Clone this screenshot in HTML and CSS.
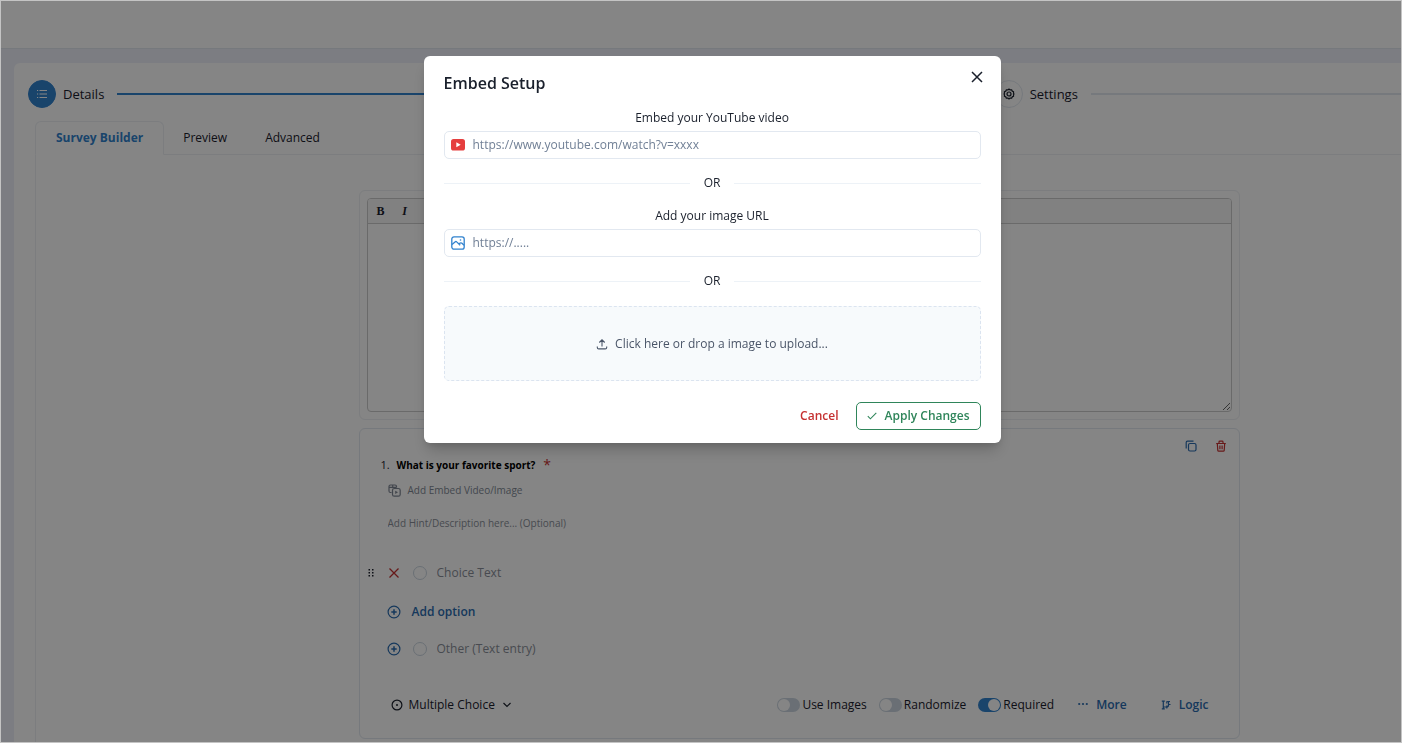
FILE: index.html
```html
<!DOCTYPE html>
<html lang="en">
<head>
<meta charset="utf-8">
<meta name="viewport" content="width=device-width, initial-scale=1">
<title>Survey Builder</title>
<link rel="stylesheet" href="styles.css">
</head>
<body>
<div class="app">
  <header class="topbar"></header>
  <main class="panel">
    <ol class="steps">
      <li class="step step-active">
        <span class="step-dot"><svg width="14" height="14" viewBox="0 0 14 14" fill="none" stroke="currentColor"><path d="M4.500 3.500H12M4.500 7H12M4.500 10.500H12M2 3.500H3.200M2 7H3.200M2 10.500H3.200"/></svg></span>
        <span class="step-name">Details</span>
        <span class="step-line"></span>
      </li>
      <li class="step">
        <span class="step-dot"><svg width="12" height="12" viewBox="0 0 24 24" fill="none" stroke="currentColor" stroke-width="2.400"><path d="M12 2.200l2.400 1.700 2.900-.3 1.200 2.700 2.700 1.200-.3 2.900L22 12l-1.100 1.600.3 2.900-2.700 1.200-1.200 2.700-2.900-.3L12 21.800l-2.400-1.700-2.900.3-1.200-2.700-2.700-1.200.3-2.900L2 12l1.100-1.600-.3-2.900 2.700-1.200 1.200-2.700 2.900.3z" stroke-linejoin="round"/><circle cx="12" cy="12" r="4"/></svg></span>
        <span class="step-name">Settings</span>
        <span class="step-line"></span>
      </li>
    </ol>

    <nav class="tabs" role="tablist">
      <button class="tab tab-active" role="tab" aria-selected="true">Survey Builder</button>
      <button class="tab" role="tab">Preview</button>
      <button class="tab" role="tab">Advanced</button>
    </nav>

    <section class="tab-body">
      <div class="card editor-card">
        <div class="editor">
          <div class="toolbar">
            <button class="tool tool-bold">B</button>
            <button class="tool tool-italic">I</button>
          </div>
          <textarea class="editor-text" aria-label="Survey introduction"></textarea>
        </div>
      </div>

      <div class="card question">
        <div class="card-actions">
          <button class="icon-btn blue" aria-label="Duplicate"><svg width="12" height="12" viewBox="0 0 12 12" fill="none" stroke="currentColor" stroke-width="1.200"><rect x="3.500" y="3.500" width="7.500" height="7.500" rx="1.500"/><path d="M1.200 8.500V2.500Q1.200 1.200 2.500 1.200H8.500"/></svg></button>
          <button class="icon-btn red" aria-label="Delete"><svg width="12" height="12" viewBox="0 0 12 12" fill="none" stroke="currentColor" stroke-width="1.200"><path d="M1.200 3.500H10.800M2.300 3.500L2.800 10.500Q2.900 11.200 3.600 11.200H8.400Q9.100 11.200 9.200 10.500L9.700 3.500M4 3.200V2Q4 1.200 4.800 1.200H7.200Q8 1.200 8 2V3.200M4.900 5.500V9.200M7.100 5.500V9.200"/></svg></button>
        </div>
        <div class="q-title">
          <span class="q-num">1.</span>
          <h2 class="q-text">What is your favorite sport?</h2>
          <span class="q-star">*</span>
        </div>
        <button class="embed-link">
          <svg width="13" height="13" viewBox="0 0 13 13" fill="none" stroke="currentColor" stroke-width="1.200"><path d="M3.500 8.500H2.500Q1 8.500 1 7V2.500Q1 1 2.500 1H7Q8.500 1 8.500 2.500V3.500M1 3.300H8.500M4.700 1V3.500"/><rect x="4.500" y="4.500" width="7.700" height="7.700" rx="1.800"/><path d="M7.200 6.700L10 8.350L7.200 10Z" fill="currentColor" stroke="none"/></svg>
          Add Embed Video/Image
        </button>
        <input class="hint-input" type="text" aria-label="Hint" placeholder="Add Hint/Description here... (Optional)">

        <div class="choice choice-first">
          <svg class="grip" width="6" height="8" viewBox="0 0 6 8" fill="currentColor"><path d="M.5 0h1.500v1.500H.5zM4 0h1.500v1.500H4zM.5 3h1.500v1.500H.5zM4 3h1.500v1.500H4zM.5 6h1.500v1.500H.5zM4 6h1.500v1.500H4z"/></svg>
          <button class="icon-btn lead red" aria-label="Remove choice"><svg width="12" height="12" viewBox="0 0 12 12" fill="none" stroke="currentColor" stroke-width="1.300"><path d="M1.500 1.500L10.500 10.500M10.500 1.500L1.500 10.500"/></svg></button>
          <input class="radio" type="radio" disabled aria-label="Choice">
          <input class="choice-input" type="text" placeholder="Choice Text" aria-label="Choice text">
        </div>
        <button class="add-option">
          <svg width="14" height="14" viewBox="0 0 14 14" fill="none" stroke="currentColor" stroke-width="1.200"><circle cx="7" cy="7" r="5.900"/><path d="M4.300 7H9.700M7 4.300V9.700" stroke-width="1.500"/></svg>
          Add option
        </button>
        <div class="choice">
          <span class="grip-gap"></span>
          <button class="icon-btn lead blue" aria-label="Add other"><svg width="14" height="14" viewBox="0 0 14 14" fill="none" stroke="currentColor" stroke-width="1.200"><circle cx="7" cy="7" r="5.900"/><path d="M4.300 7H9.700M7 4.300V9.700" stroke-width="1.500"/></svg></button>
          <input class="radio" type="radio" disabled aria-label="Other">
          <input class="choice-input" type="text" placeholder="Other (Text entry)" aria-label="Other">
        </div>

        <div class="q-footer">
          <div class="type-picker">
            <svg width="12" height="12" viewBox="0 0 12 12" fill="none" stroke="currentColor" stroke-width="1.200"><circle cx="6" cy="6" r="4.900"/><circle cx="6" cy="6" r="1" fill="currentColor" stroke="none"/></svg>
            <select class="type-select" aria-label="Question type"><option>Multiple Choice</option></select>
            <svg width="10" height="10" viewBox="0 0 10 10" fill="none" stroke="currentColor" stroke-width="1.200"><path d="M1.500 3L5 6.500L8.500 3"/></svg>
          </div>
          <div class="q-options">
            <label class="switch"><input type="checkbox">Use Images</label>
            <label class="switch"><input type="checkbox">Randomize</label>
            <label class="switch"><input type="checkbox" checked>Required</label>
            <button class="foot-btn foot-more"><svg width="10" height="10" viewBox="0 0 10 10" fill="currentColor"><circle cx="1.200" cy="4" r="1.100"/><circle cx="5" cy="4" r="1.100"/><circle cx="8.800" cy="4" r="1.100"/></svg>More</button>
            <button class="foot-btn"><svg width="10" height="10" viewBox="0 0 10 10" fill="none" stroke="currentColor" stroke-width="1.200"><path d="M2.300 1V9M.8 1.200H3.800M.8 8.800H3.800M2.300 7H5.500Q7.500 7 7.500 5V1.500M5.800 1.200V3.500M5.800 5.500V8.500M7.500 4.500H9.500M6.300 1.500H9"/></svg>Logic</button>
          </div>
        </div>
      </div>
    </section>
  </main>
</div>

<div class="overlay">
  <div class="modal" role="dialog" aria-modal="true" aria-labelledby="modal-title">
    <header class="modal-head">
      <h1 class="modal-title" id="modal-title">Embed Setup</h1>
      <button class="close" aria-label="Close"><svg width="12" height="12" viewBox="0 0 12 12" fill="none" stroke="currentColor" stroke-width="1.500"><path d="M1 1L11 11M11 1L1 11"/></svg></button>
    </header>
    <label class="field-label" for="video-url">Embed your YouTube video</label>
    <div class="field">
      <svg width="14" height="14" viewBox="0 0 14 14"><rect x="0" y="1" width="14" height="11.500" rx="2.600" fill="#e53e3e"/><path d="M5.300 4.300L9.700 6.750L5.300 9.200Z" fill="#fff"/></svg>
      <input class="field-input" id="video-url" type="url" placeholder="https://www.youtube.com/watch?v=xxxx">
    </div>
    <div class="or">OR</div>
    <label class="field-label" for="image-url">Add your image URL</label>
    <div class="field">
      <svg width="14" height="14" viewBox="0 0 14 14" fill="none" stroke="#3182ce" stroke-width="1.300"><rect x=".8" y=".8" width="12.400" height="12.400" rx="2.200"/><path d="M1 8.500L4.300 5.700Q5 5.200 5.700 5.900L9.200 9.200M7.800 7.900Q9.800 6.200 11 7.200L13 9.200"/><circle cx="9.500" cy="4" r=".8" fill="#3182ce" stroke="none"/></svg>
      <input class="field-input" id="image-url" type="url" placeholder="https://.....">
    </div>
    <div class="or">OR</div>
    <button class="drop">
      <svg width="12" height="12" viewBox="0 0 12 12" fill="none" stroke="currentColor" stroke-width="1.100"><path d="M6 8.500V2M3.300 4.500L6 1.800L8.700 4.500M1.300 8.500V9.500Q1.300 10.900 2.700 10.900H9.300Q10.700 10.900 10.700 9.500V8.500"/></svg>
      Click here or drop a image to upload...
    </button>
    <footer class="modal-foot">
      <button class="cancel">Cancel</button>
      <button class="apply"><svg width="10" height="10" viewBox="0 0 10 10" fill="none" stroke="currentColor" stroke-width="1.100"><path d="M.8 5.200L3.400 7.800L9.300 1.800"/></svg>Apply Changes</button>
    </footer>
  </div>
</div>
</body>
</html>
```

FILE: styles.css
```css
* { box-sizing: border-box; }

body {
  margin: 0;
  height: 100vh;
  overflow: hidden;
  font: 12px/18px "Open Sans", "Noto Sans", sans-serif;
  color: #1a202c;
}

button, input, select, textarea {
  font: inherit;
  color: inherit;
  background: none;
  border: 0;
  padding: 0;
  margin: 0;
}

svg { display: block; flex: none; }
h1, h2, ol { margin: 0; padding: 0; }

.app {
  height: 100%;
  overflow: hidden;
  background: #eef0f9;
}

.topbar {
  height: 49px;
  background: #fff;
  border-bottom: 1px solid #e2e8f0;
}

.panel {
  width: calc(100% + 160px);
  margin: 14px 0 0 14px;
  padding: 17px 14px 0;
  background: #fff;
  border-radius: 6px;
}

.steps {
  display: flex;
  gap: 12px;
  padding-right: 90px;
  list-style: none;
}

.step {
  display: flex;
  align-items: center;
  flex: 1;
  font-size: 13px;
}

.step-active { flex: 2; }

.step-dot {
  display: grid;
  place-items: center;
  width: 28px;
  height: 28px;
  border: 1px solid #e2e8f0;
  border-radius: 50%;
}

.step-active .step-dot {
  color: #fff;
  background: #3182ce;
  border-color: #3182ce;
}

.step-name { margin: 0 13px 0 7px; }
.step-line { flex: 1; height: 2px; background: #e2e8f0; }
.step-active .step-line { background: #3182ce; }

.tabs {
  display: flex;
  height: 34px;
  margin: 13px 0 0 7px;
  border-bottom: 1px solid #edf0f4;
}

.tab { padding: 0 19px; }

.tab-active {
  height: 34px;
  padding: 0 20px;
  font-weight: 700;
  color: #3182ce;
  background: #fff;
  border: 1px solid #edf0f4;
  border-bottom-color: #fff;
  border-radius: 6px 6px 0 0;
}

.tab-body {
  display: flex;
  flex-direction: column;
  align-items: center;
  gap: 8px;
  margin-left: 7px;
  padding: 35px 0 24px;
  border-left: 1px solid #edf0f4;
}

.card {
  width: 881px;
  border: 1px solid #edf0f4;
  border-radius: 6px;
}

.editor-card { padding: 7px; }

.editor {
  border: 1px solid #ccc;
  border-radius: 4px;
  overflow: hidden;
}

.toolbar {
  display: flex;
  gap: 6px;
  height: 25px;
  padding-left: 4px;
  background: #f7f7f7;
  border-bottom: 1px solid #ccc;
}

.tool {
  width: 18px;
  font: bold 12px "Liberation Serif", serif;
}

.tool-italic { font-style: italic; }

.editor-text {
  display: block;
  width: 100%;
  height: 187px;
  resize: vertical;
}

.question {
  padding: 11px 20px 24px 8px;
  border-color: #e2e8f0;
}

.icon-btn { display: grid; place-items: center; }
.blue { color: #2b6cb0; }
.red { color: #c53030; }

.card-actions {
  display: flex;
  justify-content: flex-end;
  gap: 18px;
  margin-right: -8px;
}

.q-title {
  display: flex;
  align-items: center;
  margin: 4px 0 0 13px;
}

.q-num { width: 16px; font-size: 11px; }
.q-text { font-size: 10px; line-height: 18px; color: #000; }
.q-star { margin-left: 8px; font-size: 14px; color: #c53030; }

.embed-link {
  display: flex;
  align-items: center;
  gap: 7px;
  margin: 7px 0 0 20px;
  font-size: 10px;
  color: #4a5568;
  opacity: .7;
}

.hint-input {
  display: block;
  width: 400px;
  height: 18px;
  margin: 15px 0 0 20px;
  font-size: 10px;
}

.hint-input::placeholder, .choice-input::placeholder { color: #8a8f99; opacity: 1; }

.choice {
  display: flex;
  align-items: center;
  height: 18px;
  margin-top: 19px;
}

.choice-first { margin-top: 32px; }
.grip { margin-right: 13px; }
.grip-gap { width: 19px; }
.lead { width: 14px; margin-right: 12px; }

.radio {
  appearance: none;
  width: 14px;
  height: 14px;
  border: 1px solid #cbd5e0;
  border-radius: 50%;
}

.choice-input { width: 400px; margin-left: 10px; }

.add-option {
  display: flex;
  align-items: center;
  gap: 11px;
  margin: 21px 0 0 19px;
  font-weight: 600;
  color: #2b6cb0;
}

.q-footer {
  display: flex;
  align-items: center;
  justify-content: space-between;
  margin: 38px 10px 0 23px;
}

.type-picker { display: flex; align-items: center; gap: 6px; }
.type-select { appearance: none; }

.q-options { display: flex; align-items: center; gap: 12px; }

.switch { display: flex; align-items: center; gap: 2px; }

.switch input {
  appearance: none;
  display: flex;
  width: 23px;
  height: 14px;
  padding: 1px;
  background: #cbd5e0;
  border-radius: 7px;
}

.switch input::before {
  content: "";
  width: 12px;
  height: 12px;
  background: #fff;
  border-radius: 50%;
}

.switch input:checked { background: #3182ce; justify-content: flex-end; }

.foot-btn {
  display: flex;
  align-items: center;
  gap: 8px;
  margin-left: 22px;
  font-weight: 600;
  color: #2b6cb0;
}

.foot-more { margin-left: 12px; }

.overlay {
  position: fixed;
  inset: 0;
  display: flex;
  justify-content: center;
  align-items: flex-start;
  padding: 55px 0 0 22px;
  background: rgba(0, 0, 0, .48);
  border: 1px solid #c4c4c4;
}

.modal {
  width: 577px;
  padding: 14px 20px 13px;
  background: #fff;
  border-radius: 6px;
  box-shadow: 0 10px 15px -3px rgba(0, 0, 0, .2), 0 4px 6px -2px rgba(0, 0, 0, .1);
}

.modal-head { display: flex; justify-content: space-between; align-items: flex-start; }
.modal-title { font-size: 16px; font-weight: 600; line-height: 26px; }
.close { padding: 1px 2px; margin-right: -4px; }
.field-label { display: block; margin: 13px 0 4px; text-align: center; }

.field {
  display: flex;
  align-items: center;
  gap: 8px;
  height: 28px;
  padding: 0 6px;
  border: 1px solid #e2e8f0;
  border-radius: 5px;
}

.field-input { flex: 1; min-width: 0; outline: 0; }
.field-input::placeholder { color: #718096; opacity: 1; }

.or {
  display: flex;
  align-items: center;
  gap: 14px;
  margin-top: 15px;
}

.or::before, .or::after { content: ""; flex: 1; height: 1px; background: #edf2f7; }

.or + .field-label { margin-top: 15px; }

.drop {
  display: flex;
  align-items: center;
  justify-content: center;
  gap: 7px;
  width: 100%;
  height: 75px;
  margin-top: 16px;
  color: #4a5568;
  background: #f7fafc;
  border: 1px dashed #dbe4f0;
  border-radius: 5px;
}

.modal-foot {
  display: flex;
  justify-content: flex-end;
  gap: 17px;
  margin-top: 21px;
  font-weight: 600;
}

.cancel { color: #c53030; }

.apply {
  display: flex;
  align-items: center;
  gap: 8px;
  height: 28px;
  padding: 0 10px;
  color: #2f855a;
  border: 1px solid #2f855a;
  border-radius: 5px;
}
```
